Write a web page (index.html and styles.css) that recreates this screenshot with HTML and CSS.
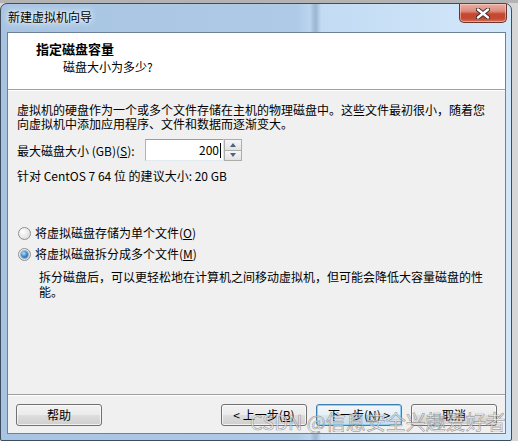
FILE: index.html
```html
<!DOCTYPE html>
<html lang="zh-CN">
<head>
<meta charset="utf-8">
<title>新建虚拟机向导</title>
<link rel="stylesheet" href="styles.css">
</head>
<body>
<div class="screen">
  <div class="window">
    <div class="titlebar">
      <span class="title">新建虚拟机向导</span>
      <div class="close">
        <svg width="14" height="11" viewBox="0 0 14 11">
          <path d="M2 1.5 L12 9.5 M12 1.5 L2 9.5" stroke="#3a2a28" stroke-width="4.2" stroke-linecap="round"/>
          <path d="M2 1.5 L12 9.5 M12 1.5 L2 9.5" stroke="#ffffff" stroke-width="2.4" stroke-linecap="round"/>
        </svg>
      </div>
    </div>
    <div class="client">
      <div class="header">
        <div class="h-title">指定磁盘容量</div>
        <div class="h-sub">磁盘大小为多少?</div>
      </div>
      <div class="body">
        <p class="desc">虚拟机的硬盘作为一个或多个文件存储在主机的物理磁盘中。这些文件最初很小，随着您<br>向虚拟机中添加应用程序、文件和数据而逐渐变大。</p>
        <div class="size-row">
          <label class="size-label">最大磁盘大小 (GB)(<u>S</u>):</label>
          <div class="spin-input">200<span class="caret"></span></div>
          <div class="spin-btns">
            <div class="sb"><span class="tri up"></span></div>
            <div class="sb"><span class="tri down"></span></div>
          </div>
        </div>
        <p class="rec">针对 CentOS 7 64 位 的建议大小: 20 GB</p>
        <div class="radio-row first">
          <span class="radio"></span>
          <span>将虚拟磁盘存储为单个文件(<u>O</u>)</span>
        </div>
        <div class="radio-row">
          <span class="radio checked"></span>
          <span>将虚拟磁盘拆分成多个文件(<u>M</u>)</span>
        </div>
        <p class="note">拆分磁盘后，可以更轻松地在计算机之间移动虚拟机，但可能会降低大容量磁盘的性<br>能。</p>
      </div>
      <div class="footer">
        <button class="btn help">帮助</button>
        <button class="btn">&lt; 上一步(<u>B</u>)</button>
        <button class="btn default">下一步(<u>N</u>) &gt;</button>
        <button class="btn">取消</button>
      </div>
    </div>
  </div>
  <div class="watermark">CSDN @信息安全兴趣爱好者</div>
</div>
</body>
</html>
```

FILE: styles.css
```css
* { box-sizing: border-box; }
html, body { margin: 0; padding: 0; }
body {
  width: 518px;
  height: 441px;
  overflow: hidden;
  background: #c9c9c9;
  font-family: "Noto Sans CJK SC", "Noto Sans", sans-serif;
  font-size: 12px;
  color: #000;
}
.screen {
  position: relative;
  width: 518px;
  height: 441px;
  padding-top: 3px;
  background: linear-gradient(to bottom, #b3b3b3 0, #b3b3b3 3px, #d6d6d6 3px);
}
.window {
  width: 512px;
  height: 438px;
  border: 1px solid #3e4c5e;
  border-radius: 7px 7px 2px 2px;
  padding: 0 5px 6px 6px;
  display: flex;
  flex-direction: column;
  background:
    linear-gradient(to right, rgba(0,0,0,0) 309px, rgba(60,90,130,0.18) 312px, rgba(60,90,130,0.28) 315px, rgba(0,0,0,0) 320px),
    linear-gradient(to right, #a7c4e2 0%, #afcae6 58%, #c2dbf3 62%, #d3e7fa 100%);
}
.titlebar {
  height: 28px;
  display: flex;
  align-items: flex-start;
  justify-content: space-between;
  margin-right: -1px;
}
.title {
  margin-left: 1px;
  line-height: 26px;
  font-size: 12px;
  color: #000;
  text-shadow: 0 0 6px #e6f1fb, 0 0 10px #e6f1fb, 0 0 3px #ffffff;
}
.close {
  width: 48px;
  height: 19px;
  border: 1px solid #6e3328;
  border-top: none;
  border-radius: 0 0 5px 5px;
  background: linear-gradient(to bottom, #eab0a5 0%, #dc8b7c 40%, #c7472f 55%, #c34a33 80%, #d7705b 100%);
  box-shadow: inset 0 0 0 1px rgba(255,220,210,0.5);
  display: flex;
  align-items: center;
  justify-content: center;
}
.client {
  flex: 1;
  border: 1px solid #6d8197;
  background: #f0f0f0;
  display: flex;
  flex-direction: column;
}
.header {
  height: 57px;
  background: #fff;
  border-bottom: 1px solid #a0a0a0;
  box-shadow: 0 1px 0 #ffffff;
  padding: 8px 0 0 28px;
}
.h-title {
  font-size: 13px;
  font-weight: bold;
  line-height: 16px;
}
.h-sub {
  margin-top: 2px;
  padding-left: 27px;
  line-height: 16px;
}
.body {
  flex: 1;
  padding: 13px 0 0 9px;
}
.desc, .rec, .note { margin: 0; line-height: 14px; }
.size-row {
  margin-top: 8px;
  height: 22px;
  display: flex;
  align-items: center;
}
.size-label { flex: 0 0 128px; }
.spin-input {
  width: 79px;
  height: 22px;
  background: #fff;
  border: 1px solid #a6b6c9;
  border-right-color: #dbe4ee;
  border-bottom-color: #e3e9f0;
  border-top-color: #8e9db0;
  text-align: right;
  padding-right: 2px;
  line-height: 20px;
  font-size: 12px;
  display: flex;
  justify-content: flex-end;
  align-items: center;
}
.caret {
  display: inline-block;
  width: 1px;
  height: 15px;
  background: #000;
  margin-left: 1px;
}
.spin-btns {
  width: 18px;
  height: 22px;
  display: flex;
  flex-direction: column;
}
.sb {
  flex: 1;
  border: 1px solid #acacac;
  background: linear-gradient(to bottom, #f6f6f6, #e2e2e2);
  display: flex;
  align-items: center;
  justify-content: center;
}
.sb + .sb { border-top: none; }
.tri { width: 0; height: 0; border-left: 3.5px solid transparent; border-right: 3.5px solid transparent; }
.tri.up { border-bottom: 4px solid #4d6087; }
.tri.down { border-top: 4px solid #4d6087; }
.rec { margin-top: 8px; }
.radio-row {
  display: flex;
  align-items: center;
  height: 16px;
  line-height: 16px;
  margin-left: 1px;
  gap: 4px;
  margin-top: 5px;
}
.radio-row.first { margin-top: 42px; }
.radio {
  width: 13px;
  height: 13px;
  border-radius: 50%;
  border: 1px solid #8e8f8f;
  background: radial-gradient(circle at 35% 35%, #ffffff 0%, #ececec 45%, #d4d4d4 100%);
  display: flex;
  align-items: center;
  justify-content: center;
}
.radio.checked::after {
  content: "";
  width: 7px;
  height: 7px;
  border-radius: 50%;
  background: radial-gradient(circle at 40% 35%, #b6e4ff 0%, #3d8fd4 45%, #174f92 100%);
  box-shadow: 0 0 0 1px rgba(40,80,130,0.4);
}
.note {
  margin-top: 7px;
  padding-left: 22px;
  line-height: 15px;
}
.footer {
  height: 39px;
  border-top: 1px solid #a0a0a0;
  box-shadow: inset 0 1px 0 #ffffff;
  padding: 9px 8px 7px;
  display: flex;
  gap: 9px;
}
.btn {
  width: 86px;
  height: 22px;
  border: 1px solid #707070;
  border-radius: 3px;
  background: linear-gradient(to bottom, #f2f2f2 0%, #ebebeb 48%, #dddddd 52%, #cfcfcf 100%);
  box-shadow: inset 0 0 0 1px rgba(255,255,255,0.7);
  font-family: "Noto Sans CJK SC", "Noto Sans", sans-serif;
  font-size: 12px;
  color: #000;
  padding: 0;
  line-height: 18px;
}
.btn.help { margin-right: auto; }
.btn.default {
  border-color: #3c7fb1;
  box-shadow: inset 0 0 0 1px #8ed1f5;
  background: linear-gradient(to bottom, #f2f7fb 0%, #e6f0f7 48%, #d6e6f2 52%, #c8dcec 100%);
}
.watermark {
  position: absolute;
  left: 250px;
  top: 408px;
  font-size: 20px;
  line-height: 28px;
  color: rgba(255,255,255,0.6);
  -webkit-text-stroke: 0.7px rgba(115,115,115,0.65);
  white-space: nowrap;
}
```
